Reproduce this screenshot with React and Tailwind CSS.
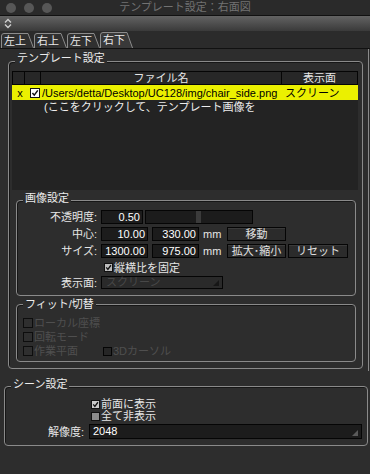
import React from 'react';

const CheckMark = ({ color = '#111' }) => (
  <svg viewBox="0 0 9 9" className="w-full h-full">
    <path d="M1.6 4.4 L3.7 6.9 L7.6 1.6" fill="none" stroke={color} strokeWidth="1.7" />
  </svg>
);

const Box = ({ checked, className = '' }) => (
  <span className={`inline-block shrink-0 w-[9px] h-[9px] border ${className}`}>
    {checked && <CheckMark />}
  </span>
);

const Corner = ({ color }) => (
  <svg viewBox="0 0 6 6" className="absolute right-[3px] bottom-[2px] w-[6px] h-[6px]">
    <polygon points="6,0 6,6 0,6" fill={color} />
  </svg>
);

const Group = ({ title, titleTop = '-top-[11px]', className = '', children }) => (
  <div className={`relative border border-[#8a8a8a] rounded-[4px] shadow-[inset_1px_1px_0_#161616] ${className}`}>
    <span className={`absolute left-[6px] ${titleTop} px-[2px] bg-[#2d2d2d] text-[#ececec] leading-[14px]`}>{title}</span>
    {children}
  </div>
);

const Field = ({ children, className = '' }) => (
  <div className={`h-[14px] bg-[#1c1c1c] border border-[#050505] text-right pr-[2px] leading-[12px] text-white ${className}`}>
    {children}
  </div>
);

const Button = ({ children, className = '' }) => (
  <div className={`h-[14px] bg-[#2b2b2b] border border-[#050505] shadow-[inset_0_1px_0_#3a3a3a] text-center leading-[12px] text-[#e0e0e0] ${className}`}>
    {children}
  </div>
);

const Label = ({ children, className = 'w-[80px]' }) => (
  <span className={`${className} shrink-0 text-right text-[#e6e6e6]`}>{children}</span>
);

const Tab = ({ label, active }) => (
  <div className={`relative w-[33px] ${active ? 'h-[16px]' : 'h-[15px]'} pl-[3px] pt-[1px] text-[#e8e8e8]`}>
    <svg viewBox={`0 0 33 ${active ? 16 : 15}`} className="absolute inset-0 w-full h-full">
      <path
        d={`M0.5 ${active ? 16 : 15} V3 Q0.5 0.5 3 0.5 H27 L32.5 ${active ? 16 : 15}`}
        fill={active ? '#393939' : '#303030'}
        stroke="#8c8c8c"
      />
    </svg>
    <span className="relative">{label}</span>
  </div>
);

export default function App() {
  return (
    <div className="w-[370px] h-[474px] overflow-hidden bg-[#2d2d2d] text-[11px] leading-[14px] text-[#e6e6e6] font-[family-name:'Liberation_Sans','Noto_Sans_CJK_JP',sans-serif]">
      {/* title bar */}
      <div className="relative h-[16px] bg-[#2a2a2a] border-b border-[#111] flex items-center gap-[8px] pl-[6px]">
        <span className="w-[10px] h-[10px] rounded-full bg-[#575757]" />
        <span className="w-[10px] h-[10px] rounded-full bg-[#575757]" />
        <span className="w-[10px] h-[10px] rounded-full bg-[#575757]" />
        <span className="absolute inset-0 text-center text-[#727272] leading-[15px]">テンプレート設定：右面図</span>
      </div>

      {/* toolbar */}
      <div className="h-[15px] bg-[linear-gradient(#636363,#3a3a3a)] flex items-center pl-[4px]">
        <svg viewBox="0 0 8 11" className="w-[8px] h-[11px]">
          <path d="M1 4.5 L4 1.5 L7 4.5 M1 6.5 L4 9.5 L7 6.5" fill="none" stroke="#cfcfcf" strokeWidth="1.4" />
        </svg>
      </div>

      {/* tabs */}
      <div className="h-[18px] bg-[#2b2b2b] border-b border-[#111] flex items-end pl-[1px]">
        <Tab label="左上" />
        <Tab label="右上" />
        <Tab label="左下" />
        <Tab label="右下" active />
      </div>

      {/* tab pane */}
      <div className="w-[369px] border-r border-[#8a8a8a] pt-[12px] pl-[8px] pb-[2px]">
        <Group title="テンプレート設定" className="w-[355px] pt-[9px] pl-[3px] pb-[6px]">
          {/* file table */}
          <div className="w-[346px] h-[119px] bg-[#232323]">
            <div className="flex h-[14px] border-y border-[#050505] bg-[#272727] text-[#e6e6e6] leading-[12px]">
              <div className="w-[13px] border-x border-[#050505]" />
              <div className="w-[16px] border-r border-[#050505]" />
              <div className="w-[241px] border-r border-[#050505] text-center">ファイル名</div>
              <div className="flex-1 border-r border-[#050505] text-center">表示面</div>
            </div>
            <div className="flex items-center h-[15px] bg-[#ebf000] text-black">
              <span className="w-[13px] text-center pl-[3px]">x</span>
              <span className="w-[16px] flex justify-end pr-[1px]">
                <Box checked className="w-[10px] h-[10px] bg-white border-[#111]" />
              </span>
              <span className="w-[241px] pl-[1px] whitespace-nowrap">/Users/detta/Desktop/UC128/img/chair_side.png</span>
              <span className="pl-[3px]">スクリーン</span>
            </div>
            <div className="h-[15px] pl-[32px] text-[#ededed] whitespace-nowrap">(ここをクリックして、テンプレート画像を</div>
          </div>

          {/* image settings */}
          <Group title="画像設定" titleTop="-top-[10px]" className="ml-[4px] mt-[10px] w-[340px] pt-[9px] pb-[6px]">
            <div className="flex flex-col gap-[3px]">
              <div className="flex items-center h-[14px]">
                <Label>不透明度:</Label>
                <Field className="ml-[4px] w-[42px]">0.50</Field>
                <div className="relative ml-[2px] w-[108px] h-[14px] bg-[#1c1c1c] border border-[#050505]">
                  <span className="absolute left-[50px] top-0 bottom-0 w-[5px] bg-[#3b3b3b]" />
                </div>
              </div>
              <div className="flex items-center h-[14px]">
                <Label>中心:</Label>
                <Field className="ml-[4px] w-[47px]">10.00</Field>
                <Field className="ml-[4px] w-[47px]">330.00</Field>
                <span className="ml-[4px] w-[24px]">mm</span>
                <Button className="w-[59px]">移動</Button>
              </div>
              <div className="flex items-center h-[14px]">
                <Label>サイズ:</Label>
                <Field className="ml-[4px] w-[47px]">1300.00</Field>
                <Field className="ml-[4px] w-[47px]">975.00</Field>
                <span className="ml-[4px] w-[24px]">mm</span>
                <Button className="w-[59px]">拡大･縮小</Button>
                <Button className="ml-[2px] w-[60px]">リセット</Button>
              </div>
            </div>
            <div className="flex items-center h-[13px] mt-[3px] pl-[87px] gap-[1px]">
              <Box checked className="bg-[#bdbdbd] border-[#111]" />
              <span>縦横比を固定</span>
            </div>
            <div className="flex items-center h-[13px] mt-[2px]">
              <Label>表示面:</Label>
              <div className="relative ml-[4px] w-[122px] h-[13px] bg-[#2a2a2a] border border-[#050505] pl-[4px] leading-[11px] text-[#484848]">
                スクリーン
                <Corner color="#161616" />
              </div>
            </div>
          </Group>

          {/* fit / switch */}
          <Group title="フィット/切替" titleTop="-top-[8px]" className="ml-[4px] mt-[8px] w-[340px] pt-[11px] pb-[3px] pl-[6px] text-[#4f4f4f]">
            <div className="flex items-center h-[14px] gap-[1px]">
              <Box className="w-[10px] h-[10px] border-[#0d0d0d] bg-[#2f2f2f]" />
              <span>ローカル座標</span>
            </div>
            <div className="flex items-center h-[14px] gap-[1px]">
              <Box className="w-[10px] h-[10px] border-[#0d0d0d] bg-[#2f2f2f]" />
              <span>回転モード</span>
            </div>
            <div className="flex items-center h-[14px]">
              <div className="flex items-center w-[80px] gap-[1px]">
                <Box className="w-[10px] h-[10px] border-[#0d0d0d] bg-[#2f2f2f]" />
                <span>作業平面</span>
              </div>
              <Box className="w-[9px] h-[9px] border-[#050505] bg-[#262626]" />
              <span className="ml-[1px]">3Dカーソル</span>
            </div>
          </Group>
        </Group>
      </div>

      {/* scene settings */}
      <Group title="シーン設定" titleTop="-top-[10px]" className="ml-[4px] mt-[15px] w-[364px] pt-[11px] pb-[6px]">
        <div className="flex items-center h-[12px] pl-[86px] gap-[1px]">
          <Box checked className="bg-[#c9c9c9] border-[#111]" />
          <span>前面に表示</span>
        </div>
        <div className="flex items-center h-[12px] pl-[86px] gap-[1px]">
          <Box className="bg-[#8c8c8c] border-[#111]" />
          <span>全て非表示</span>
        </div>
        <div className="flex items-center h-[15px] mt-[2px]">
          <Label className="w-[79px]">解像度:</Label>
          <div className="relative ml-[5px] w-[273px] h-[15px] bg-[#1c1c1c] border border-[#050505] pl-[3px] leading-[13px] text-white">
            2048
            <Corner color="#5a5a5a" />
          </div>
        </div>
      </Group>
    </div>
  );
}
